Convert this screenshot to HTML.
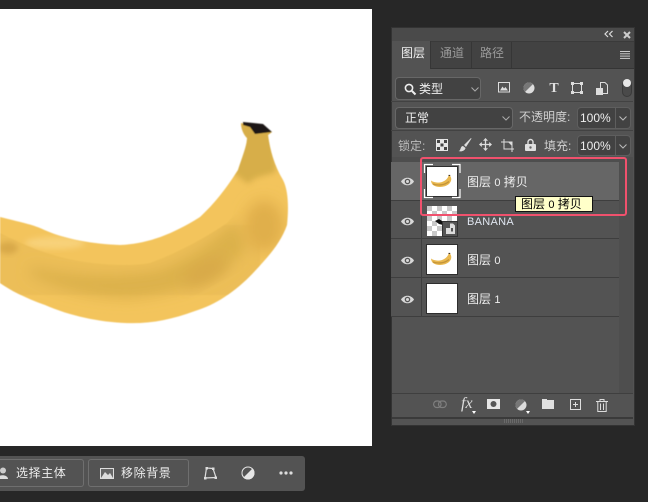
<!DOCTYPE html>
<html lang="zh"><head><meta charset="utf-8"><style>
html,body{margin:0;padding:0}
body{width:648px;height:502px;overflow:hidden;background:#272727;position:relative;font-family:"Liberation Sans","Noto Sans CJK SC",sans-serif;color:#e0e0e0}
div,span.a{position:absolute;box-sizing:border-box}
.t{white-space:nowrap;font-size:12px;line-height:16px}
.box{background:#424242;border:1px solid #676767;border-radius:4px}
.sep{left:391px;width:242px;height:1px;background:#3c3c3c}
.row{left:391px;width:228px;height:38px;background:#535353;border-bottom:1px solid #3e3e3e}
.thumb{left:427px;width:30px;height:29px;background:#fff;border:0;box-shadow:0 0 0 1px #2e2e2e}
svg{position:absolute;overflow:visible}
</style></head><body>
<div style="left:0;top:9px;width:372px;height:437px;background:#fff"></div>
<svg style="left:0;top:0" width="372" height="446" viewBox="0 0 372 446">
<defs>
<filter id="b" x="-30%" y="-30%" width="160%" height="160%"><feGaussianBlur stdDeviation="7"/></filter>
<filter id="b2" x="-30%" y="-30%" width="160%" height="160%"><feGaussianBlur stdDeviation="3"/></filter>
<filter id="e"><feGaussianBlur stdDeviation=".6"/></filter>
<clipPath id="c"><path d="M0 217C20 222 30 224 40 228C65 240 95 244 120 245C145 244 170 236 200 217C215 203 225 190 238 170C243 155 247 145 247 138C243 134 241 128 241 123L272 132L268 135C270 150 274 165 283 180C288 190 289 205 287 225C280 245 265 260 253 273C235 292 215 305 195 311C170 320 150 324 125 323C100 322 70 316 45 305C25 298 10 290 0 283Z"/></clipPath>
<clipPath id="r"><path d="M0 233C20 243 35 250 60 257C90 265 130 267 150 263C180 252 205 238 227 223L240 208L300 170V340H0Z"/></clipPath>
</defs>
<g filter="url(#e)">
<g clip-path="url(#c)">
<rect x="-5" y="115" width="300" height="215" fill="#f3c45c"/>
<ellipse cx="55" cy="243" rx="30" ry="6" fill="#f8d27a" filter="url(#b2)"/>
<g clip-path="url(#r)">
<rect x="0" y="225" width="260" height="70" fill="#ecbe58"/>
<path d="M30 266C70 276 120 278 160 270C190 258 215 240 235 220L248 245C232 270 195 292 130 298C90 298 55 288 30 275Z" fill="#dcb14c" filter="url(#b)"/>
<ellipse cx="205" cy="272" rx="24" ry="10" transform="rotate(-28 205 272)" fill="#d8a948" filter="url(#b)"/>
</g>
<ellipse cx="264" cy="226" rx="20" ry="26" fill="#e0af4c" filter="url(#b)"/>
<ellipse cx="8" cy="248" rx="10" ry="6" fill="#d8a848" filter="url(#b2)"/>
<path d="M238 120L274 128L276 172C266 176 255 176 248 184L232 172Z" fill="#d7ae48" filter="url(#b2)"/>
</g>
<path d="M243 122L263 124L272 132L255 134L250 127L243 125Z" fill="#1d1714"/>
</g>
</svg>

<!-- bottom toolbar -->
<div style="left:0;top:456px;width:305px;height:35px;background:#535353;border-radius:0 3px 3px 0"></div>
<div style="left:-10px;top:459px;width:94px;height:28px;border:1px solid #6f6f6f;border-radius:3px"></div>
<div style="left:88px;top:459px;width:101px;height:28px;border:1px solid #6f6f6f;border-radius:3px"></div>
<svg style="left:0;top:467px" width="10" height="13"><circle cx="3" cy="3.5" r="3" fill="#ccc"/><path d="M-3 12C-3 7 8 7 8 12Z" fill="#ddd"/></svg>
<div class="t" style="left:16px;top:465px;font-size:12px;letter-spacing:.6px;color:#ececec">选择主体</div>
<svg style="left:100px;top:468px" width="14" height="11"><rect x=".5" y=".5" width="13" height="10" fill="#666" stroke="#ddd"/><path d="M1 10L5 4L8 7L10 5L13 10Z" fill="#ddd"/></svg>
<div class="t" style="left:121px;top:465px;font-size:12px;letter-spacing:.6px;color:#ececec">移除背景</div>
<svg style="left:203px;top:466px" width="14" height="14" fill="none" stroke="#ddd" stroke-width="1.2"><path d="M2 12L3.5 2L10 2.5L13 11.5Z"/><g fill="#ddd" stroke="none"><rect x="1" y="11" width="2.5" height="2.5"/><rect x="2.5" y="1" width="2.5" height="2.5"/><rect x="9" y="1.5" width="2.5" height="2.5"/><rect x="11.5" y="10.5" width="2.5" height="2.5"/></g></svg>
<svg style="left:241px;top:466px" width="14" height="14"><circle cx="7" cy="7" r="6.5" fill="#e6e6e6"/><path d="M11.6 2.4A6.5 6.5 0 0 0 2.4 11.6Z" fill="#535353"/><circle cx="7" cy="7" r="6" fill="none" stroke="#e6e6e6"/></svg>
<svg style="left:279px;top:471px" width="14" height="4" fill="#ddd"><circle cx="2" cy="2" r="1.6"/><circle cx="7" cy="2" r="1.6"/><circle cx="12" cy="2" r="1.6"/></svg>

<!-- panel -->
<div style="left:391px;top:27px;width:244px;height:399px;background:#535353;border:1px solid #333"></div>
<div style="left:392px;top:28px;width:242px;height:13px;background:#4a4a4a"></div>
<svg style="left:604px;top:30px" width="10" height="8" fill="none" stroke="#ddd" stroke-width="1.2"><path d="M4 1L1 4L4 7M8.5 1L5.5 4L8.5 7"/></svg>
<svg style="left:623px;top:31px" width="8" height="8" fill="none" stroke="#ccc" stroke-width="2"><path d="M1 1L7 7M7 1L1 7"/></svg>
<div style="left:392px;top:41px;width:242px;height:28px;background:#424242;border-top:1px solid #3a3a3a;border-bottom:1px solid #353535"></div>
<div style="left:392px;top:41px;width:39px;height:28px;background:#535353;border-right:1px solid #363636"></div>
<div style="left:471px;top:42px;width:1px;height:26px;background:#363636"></div>
<div style="left:511px;top:42px;width:1px;height:26px;background:#363636"></div>
<div class="t" style="left:401px;top:45px;color:#f0f0f0">图层</div>
<div class="t" style="left:440px;top:45px;color:#9a9a9a">通道</div>
<div class="t" style="left:480px;top:45px;color:#9a9a9a">路径</div>
<svg style="left:620px;top:51px" width="10" height="8" fill="#ccc"><rect width="10" height="1"/><rect y="2.3" width="10" height="1"/><rect y="4.6" width="10" height="1"/><rect y="6.9" width="10" height="1"/></svg>

<div class="box" style="left:395px;top:77px;width:86px;height:23px"></div>
<svg style="left:404px;top:83px" width="12" height="12" fill="none" stroke="#eee" stroke-width="1.6"><circle cx="5" cy="5" r="3.6"/><path d="M8 8L11.5 11.5" stroke-width="2"/></svg>
<div class="t" style="left:419px;top:81px;color:#eee">类型</div>
<svg style="left:471px;top:87px" width="8" height="5" fill="none" stroke="#aaa"><path d="M.5 .5L4 4L7.5 .5"/></svg>
<svg style="left:498px;top:82px" width="12" height="11"><rect x=".5" y=".5" width="11" height="9.5" fill="none" stroke="#ddd"/><path d="M2 8.5L4.5 4.5L6 6.5L7.5 5L10 8.5Z" fill="#ddd"/></svg>
<svg style="left:523px;top:82px" width="12" height="12"><circle cx="6" cy="6" r="5.5" fill="#ddd"/><path d="M9.9 2.1A5.5 5.5 0 0 0 2.1 9.9Z" fill="#777"/></svg>
<div class="t" style="left:547px;top:80px;width:14px;font:bold 14px 'Liberation Serif',serif;line-height:17px;color:#e0e0e0;text-align:center">T</div>
<svg style="left:571px;top:82px" width="12" height="12" fill="none" stroke="#ddd"><rect x="1.5" y="1.5" width="9" height="9"/><g fill="#ddd" stroke="none"><rect width="3" height="3"/><rect x="9" width="3" height="3"/><rect y="9" width="3" height="3"/><rect x="9" y="9" width="3" height="3"/></g></svg>
<svg style="left:596px;top:82px" width="12" height="13"><path d="M4.5 .5H9L11.5 3V11.5H4.5Z" fill="none" stroke="#ddd"/><rect x="0" y="6" width="7" height="7" fill="#ddd"/></svg>
<div style="left:622px;top:80px;width:10px;height:17px;border:1px solid #3a3a3a;border-radius:5px;background:#4a4a4a"></div>
<div style="left:623px;top:79px;width:8px;height:8px;border-radius:50%;background:#e8e8e8"></div>
<div class="sep" style="top:101px;background:#424242"></div>

<div class="box" style="left:395px;top:107px;width:118px;height:22px"></div>
<div class="t" style="left:405px;top:110px;color:#eee">正常</div>
<svg style="left:502px;top:116px" width="8" height="5" fill="none" stroke="#aaa"><path d="M.5 .5L4 4L7.5 .5"/></svg>
<div class="t" style="left:519px;top:109px;color:#cfcfcf">不透明度:</div>
<div class="box" style="left:577px;top:107px;width:54px;height:22px;border-color:#5e5e5e"></div>
<div style="left:615px;top:107px;width:1px;height:22px;background:#5e5e5e"></div>
<div class="t" style="left:580px;top:110px;color:#eee">100%</div>
<svg style="left:619px;top:116px" width="8" height="5" fill="none" stroke="#bbb"><path d="M.5 .5L4 4L7.5 .5"/></svg>
<div class="sep" style="top:130px;background:#424242"></div>

<div class="t" style="left:398px;top:138px;color:#bdbdbd">锁定:</div>
<svg style="left:436px;top:139px" width="12" height="12"><rect width="12" height="12" fill="#e6e6e6"/><g fill="#444"><rect x="1" y="1" width="3" height="3"/><rect x="8" y="1" width="3" height="3"/><rect x="4.5" y="4.5" width="3" height="3"/><rect x="1" y="8" width="3" height="3"/><rect x="8" y="8" width="3" height="3"/></g></svg>
<svg style="left:458px;top:138px" width="14" height="14" fill="#ddd"><path d="M13 0L6 7L8 9L13.5 .5Z"/><path d="M5 8C3 8 3 10 2 12C1.800 12.500 1 13 .5 13C3 14 7 13 7.500 10Z"/></svg>
<svg style="left:479px;top:138px" width="13" height="13" fill="none" stroke="#ddd" stroke-width="1.3"><path d="M6.5 1V12M1 6.500H12"/><g fill="#ddd" stroke="none"><path d="M6.500 0L9 2.800H4Z"/><path d="M6.500 13L9 10.200H4Z"/><path d="M0 6.500L2.800 4V9Z"/><path d="M13 6.500L10.200 4V9Z"/></g></svg>
<svg style="left:501px;top:139px" width="14" height="13" fill="none" stroke="#ddd"><path d="M3 .0V10H13M0 3H11V13"/><path d="M7 3L11 7V3Z" fill="#ddd" stroke="none"/></svg>
<svg style="left:525px;top:138px" width="11" height="13"><path d="M3 6V4A2.500 2.500 0 0 1 8 4V6" fill="none" stroke="#ddd" stroke-width="1.400"/><rect y="6" width="11" height="7" fill="#e0e0e0" rx="1"/><circle cx="5.500" cy="9.500" r="1.200" fill="#666"/></svg>
<div class="t" style="left:544px;top:138px;color:#cfcfcf">填充:</div>
<div class="box" style="left:577px;top:135px;width:54px;height:21px;border-color:#5e5e5e"></div>
<div style="left:615px;top:135px;width:1px;height:21px;background:#5e5e5e"></div>
<div class="t" style="left:580px;top:138px;color:#eee">100%</div>
<svg style="left:619px;top:144px" width="8" height="5" fill="none" stroke="#bbb"><path d="M.5 .5L4 4L7.5 .5"/></svg>

<!-- layers -->
<div style="left:619px;top:157px;width:14px;height:236px;background:#4e4e4e"></div>
<div style="left:392px;top:157px;width:227px;height:5px;background:#4e4e4e"></div>
<div class="row" style="top:162px;background:#666;height:39px"></div>
<div class="row" style="top:201px"></div>
<div class="row" style="top:239px;height:39px"></div>
<div class="row" style="top:278px;height:39px"></div>
<div style="left:421px;top:162px;width:1px;height:155px;background:#3f3f3f"></div>

<svg width="0" height="0" style="position:absolute"><defs>
<g id="eye"><path d="M0 5.500C3 .5 10 .5 13 5.500C10 10.500 3 10.500 0 5.500Z" fill="#d8d8d8"/><circle cx="6.500" cy="5.500" r="2.800" fill="#555"/><circle cx="6.500" cy="5.500" r="1.500" fill="#d8d8d8"/></g>
<g id="ban"><path d="M0 5.500C3 8 10 8.500 14 5.500C16 4 17 2.500 17.500 1L17.500 0H19L19.200 1C21 3.500 20.500 6.500 18 9C14 12.500 6 13 2 10C.8 9 .2 7.500 0 5.500Z" fill="#e9b84f"/><path d="M2 9C7 11 14 10 18 6.500" stroke="#c39439" fill="none" stroke-width="1.300"/><path d="M17.500 .4H19.200" stroke="#3a2a15"/></g>
<pattern id="ck" width="10" height="10" patternUnits="userSpaceOnUse"><rect width="10" height="10" fill="#fff"/><rect width="5" height="5" fill="#c9c9c9"/><rect x="5" y="5" width="5" height="5" fill="#c9c9c9"/></pattern>
</defs></svg>
<svg style="left:401px;top:176px" width="13" height="11"><use href="#eye"/></svg>
<svg style="left:401px;top:216px" width="13" height="11"><use href="#eye"/></svg>
<svg style="left:401px;top:255px" width="13" height="11"><use href="#eye"/></svg>
<svg style="left:401px;top:294px" width="13" height="11"><use href="#eye"/></svg>

<div class="thumb" style="top:167px"></div>
<svg style="left:424px;top:164px" width="37" height="34" fill="none" stroke="#fff" stroke-width="1.200"><path d="M.5 9V.5H9M28 .5H36V9M.5 25V33.500H9M28 33.500H36V25"/></svg>
<svg style="left:431px;top:175px" width="21" height="13"><use href="#ban"/></svg>

<svg style="left:427px;top:206px" width="30" height="30">
<rect width="30" height="30" fill="url(#ck)"/>
<path d="M8 15L12 13L15 15L16 19L12 18Z" fill="#111"/>
<rect x="15.500" y="15.500" width="15" height="15" fill="#555" stroke="#333"/>
<path d="M23 17.500H26L28 19.500V28H19V22H23Z" fill="#ddd"/><rect x="24" y="22" width="2" height="3.500" fill="#555"/>
</svg>

<div class="thumb" style="top:245px"></div>
<svg style="left:431px;top:253px" width="21" height="13"><use href="#ban"/></svg>
<div class="thumb" style="top:284px"></div>

<div class="t" style="left:467px;top:174px;color:#eee">图层 <span style="font-size:11px">0</span> 拷贝</div>
<div class="t" style="left:467px;top:214px;font-size:11px;letter-spacing:.3px;color:#dfe5ef">BANANA</div>
<div class="t" style="left:467px;top:252px;color:#eee">图层 <span style="font-size:11px">0</span></div>
<div class="t" style="left:467px;top:291px;color:#eee">图层 <span style="font-size:11px">1</span></div>

<div style="left:420px;top:157px;width:207px;height:59px;border:2px solid #f0516d;border-radius:3px"></div>
<div class="t" style="left:515px;top:196px;width:78px;height:16px;background:#ffffc9;border:1px solid #111;color:#000;padding-left:5px;line-height:14px">图层 <span style="font-size:11px">0</span> 拷贝</div>

<!-- bottom bar -->
<div style="left:392px;top:393px;width:241px;height:24px;background:#535353;border-top:1px solid #3f3f3f"></div>
<div style="left:392px;top:417px;width:241px;height:2px;background:#3a3a3a"></div>
<svg style="left:433px;top:400px" width="14" height="9" fill="none" stroke="#7f7f7f" stroke-width="1.200"><rect x=".6" y="1" width="7.500" height="6.500" rx="3.200"/><rect x="5.500" y="1" width="7.800" height="6.500" rx="3.200"/></svg>
<div class="t" style="left:461px;top:395px;font:italic 16px 'Liberation Serif',serif;line-height:18px;color:#ddd">fx</div>
<div style="left:472px;top:411px;width:0;height:0;border:2.500px solid transparent;border-top:3px solid #fff"></div>
<svg style="left:487px;top:399px" width="13" height="10"><rect width="13" height="10" fill="#e6e6e6"/><circle cx="6.500" cy="5" r="3" fill="#555"/></svg>
<svg style="left:515px;top:399px" width="12" height="12"><circle cx="6" cy="6" r="5.500" fill="#ddd"/><path d="M9.900 2.100A5.500 5.500 0 0 0 2.100 9.900Z" fill="#777"/></svg>
<div style="left:526px;top:411px;width:0;height:0;border:2.500px solid transparent;border-top:3px solid #fff"></div>
<svg style="left:542px;top:399px" width="12" height="10" fill="#dfdfdf"><path d="M0 0H5V1H12V10H0Z"/></svg>
<svg style="left:570px;top:399px" width="11" height="11" fill="none" stroke="#ddd"><rect x=".5" y=".5" width="10" height="10"/><path d="M5.500 3V8M3 5.500H8"/></svg>
<svg style="left:596px;top:399px" width="12" height="13" fill="none" stroke="#ddd"><path d="M0 2.500H12M4 2V.5H8V2M1.800 3V12.500H10.200V3M4.500 4.500V11M7.500 4.500V11"/></svg>
<div style="left:504px;top:419px;width:20px;height:4px;background:repeating-linear-gradient(90deg,#6a6a6a 0 1px,transparent 1px 2px)"></div>
</body></html>
